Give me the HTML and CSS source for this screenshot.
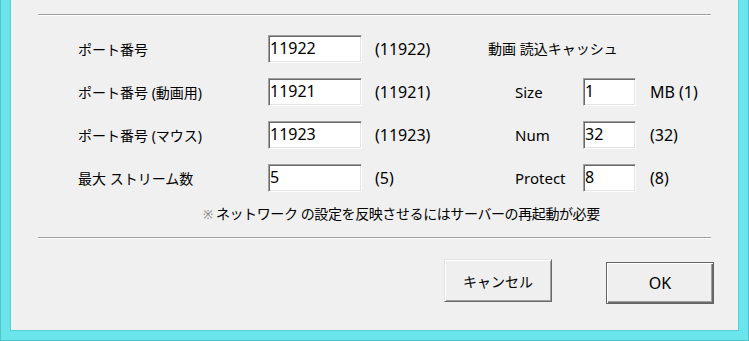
FILE: index.html
```html
<!DOCTYPE html>
<html lang="ja">
<head>
  <meta charset="UTF-8">
  <title>設定</title>
  <link rel="stylesheet" href="styles.css">
</head>
<body>
  <div class="frame">
    <div class="client">
      <div class="rule"></div>

      <div class="settings">
        <!-- port settings -->
        <div class="ports">
          <span class="label jp">ポート番号</span>
          <input class="field" type="text" value="11922">
          <span class="def">(11922)</span>

          <span class="label jp">ポート番号 (動画用)</span>
          <input class="field" type="text" value="11921">
          <span class="def">(11921)</span>

          <span class="label jp">ポート番号 (マウス)</span>
          <input class="field" type="text" value="11923">
          <span class="def">(11923)</span>

          <span class="label jp">最大 ストリーム数</span>
          <input class="field" type="text" value="5">
          <span class="def">(5)</span>
        </div>

        <!-- video cache -->
        <div class="cache">
          <div class="cache-title jp">動画 読込キャッシュ</div>
          <div class="cache-grid">
            <span class="label">Size</span>
            <input class="field small" type="text" value="1">
            <span class="def">MB (1)</span>

            <span class="label">Num</span>
            <input class="field small" type="text" value="32">
            <span class="def">(32)</span>

            <span class="label">Protect</span>
            <input class="field small" type="text" value="8">
            <span class="def">(8)</span>
          </div>
        </div>
      </div>

      <p class="note jp"><span class="mark">※</span> ネットワーク の設定を反映させるにはサーバーの再起動が必要</p>

      <div class="rule"></div>

      <div class="buttons">
        <button class="button cancel jp">キャンセル</button>
        <button class="button ok">OK</button>
      </div>
    </div>
  </div>
</body>
</html>
```

FILE: styles.css
```css
body {
  margin: 0;
  padding: 0;
  font-family: "Noto Sans", "Noto Sans CJK JP", sans-serif;
  font-size: 15px;
  color: #000;
}

.jp {
  font-size: 14px;
}

/* window frame, cut off at the top */
.frame {
  width: 749px;
  height: 341px;
  box-sizing: border-box;
  background-color: #6ae5eb;
  border: 1px solid #4fc3c9;
  border-top: none;
  padding: 0 9px 9px 9px;
}

.client {
  height: 100%;
  box-sizing: border-box;
  background-color: #f0f0f0;
  border: 1px solid #58cfd5;
  border-top: none;
  padding: 0 27px 0 27px;
  display: flex;
  flex-direction: column;
}

.rule {
  height: 1px;
  background-color: #a0a0a0;
  border-bottom: 1px solid #fff;
  flex-shrink: 0;
}

.client > .rule:first-child {
  margin-top: 14px;
}

.settings {
  display: flex;
  margin-top: 19px;
  padding-left: 40px;
}

.ports {
  width: 410px;
  display: grid;
  grid-template-columns: 190px 94px 126px;
  grid-auto-rows: 28px;
  row-gap: 15px;
  align-items: center;
}

.def {
  padding-left: 13px;
  font-size: 16px;
}

.field {
  box-sizing: border-box;
  width: 94px;
  height: 28px;
  margin: 0;
  padding: 0 0 2px 1px;
  font-family: "Noto Sans", sans-serif;
  font-size: 16px;
  color: #000;
  background-color: #fff;
  border: 1px solid;
  border-color: #a0a0a0 #fff #fff #a0a0a0;
  box-shadow: inset 1px 1px 0 #696969, inset -1px -1px 0 #e3e3e3;
  outline: none;
}

.field.small {
  width: 53px;
}

.cache {
  display: flex;
  flex-direction: column;
  row-gap: 15px;
}

.cache-title {
  height: 28px;
  line-height: 28px;
}

.cache-grid {
  padding-left: 27px;
  display: grid;
  grid-template-columns: 68px 53px auto;
  grid-auto-rows: 28px;
  row-gap: 15px;
  align-items: center;
}

.cache-grid .def {
  padding-left: 14px;
}

.note {
  margin: 12px 0 0 0;
  padding-left: 165px;
  height: 20px;
  line-height: 20px;
  letter-spacing: -0.4px;
}

.note .mark {
  color: #7a7a7a;
  font-size: 12px;
}

.note + .rule {
  margin-top: 13px;
}

.buttons {
  display: flex;
  justify-content: flex-end;
  align-items: flex-start;
  column-gap: 54px;
  margin-right: -3px;
}

.button {
  box-sizing: border-box;
  width: 108px;
  margin: 0;
  padding: 0;
  font-family: "Noto Sans", "Noto Sans CJK JP", sans-serif;
  color: #000;
  background-color: #efefef;
  border: 1px solid;
  border-color: #e3e3e3 #696969 #696969 #e3e3e3;
  box-shadow: inset 1px 1px 0 #fff, inset -1px -1px 0 #a0a0a0;
}

.button.cancel {
  height: 43px;
  margin-top: 20px;
}

.button.ok {
  height: 42px;
  margin-top: 23px;
  font-size: 16px;
  border-color: #646464;
  box-shadow: inset 1px 1px 0 #fff, inset -1px -1px 0 #696969, inset -2px -2px 0 #a0a0a0;
}
```
